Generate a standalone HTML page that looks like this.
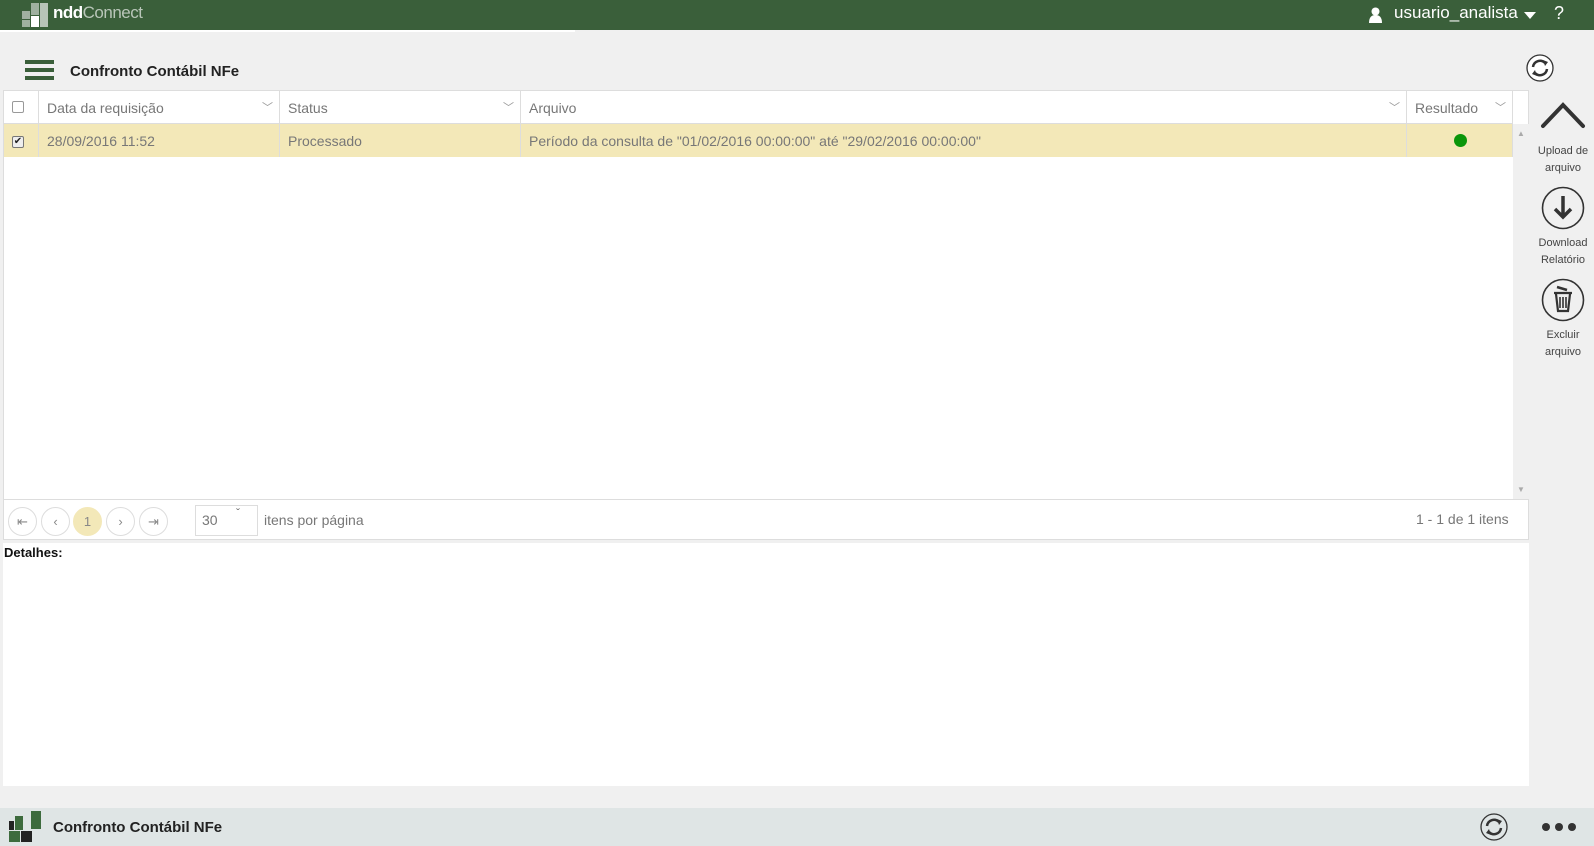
<!DOCTYPE html>
<html><head><meta charset="utf-8"><style>
*{box-sizing:border-box;margin:0;padding:0}
body{width:1594px;height:846px;overflow:hidden;background:#f0f0f0;font-family:"Segoe UI","Liberation Sans",sans-serif;color:#333;position:relative}
.a{position:absolute}
.hdr{left:0;top:0;width:1594px;height:30px;background:#3a5f3a}
.grid{left:3px;top:90px;width:1526px;height:410px;background:#fff;border:1px solid #ddd}
.th{position:absolute;top:0;height:33px;border-right:1px solid #ddd;border-bottom:1px solid #ddd;font-size:14px;color:#777;padding:9px 0 0 8px}
.td{position:absolute;top:33px;height:33px;border-right:1px solid #ddd;font-size:14px;color:#777;padding:9px 0 0 8px;background:#f3e8b8}
.chev{position:absolute;right:6px;top:8px;font-size:11px;color:#999}
.pb{position:absolute;top:507px;width:29px;height:29px;border:1px solid #ddd;border-radius:50%;background:#fff;font-size:13px;color:#888;text-align:center;line-height:27px}
.lbl{font-size:11px;color:#444;text-align:center;line-height:17px;width:60px}
</style></head><body>
<div class="a hdr"></div>
<svg class="a" style="left:22px;top:3px" width="26" height="24"><rect x="0" y="8" width="8" height="8" fill="#9fb09f"/><rect x="9" y="0" width="8" height="12" fill="#9fb09f"/><rect x="9" y="13" width="8" height="11" fill="#fff"/><rect x="18" y="0" width="8" height="24" fill="#b8c4b8"/><rect x="0" y="17" width="8" height="7" fill="#9fb09f"/></svg>
<div class="a" style="left:53px;top:3px;font-size:17px;color:#fff;font-weight:bold;letter-spacing:-0.5px">ndd<span style="font-weight:normal;color:#b9c6b9">Connect</span></div>
<svg class="a" style="left:1368px;top:7px" width="15" height="16"><circle cx="7.5" cy="4.5" r="4" fill="#fff"/><path d="M1 16 Q1 8 7.5 8 Q14 8 14 16Z" fill="#fff"/></svg>
<div class="a" style="left:1394px;top:3px;font-size:17px;color:#fff">usuario_analista</div>
<svg class="a" style="left:1524px;top:12px" width="12" height="7"><path d="M0 0H12L6 7Z" fill="#fff"/></svg>
<div class="a" style="left:1554px;top:3px;font-size:18px;color:#fff">?</div>
<div class="a" style="left:0;top:30px;width:575px;height:2px;background:#fff"></div>
<div class="a" style="left:25px;top:60px;width:29px;height:4px;background:#3a5f3a;box-shadow:0 8px 0 #3a5f3a,0 16px 0 #3a5f3a"></div>
<div class="a" style="left:70px;top:63px;font-size:15px;font-weight:bold;color:#222">Confronto Contábil NFe</div>
<svg class="a" style="left:1526px;top:54px" width="28" height="28" viewBox="0 0 28 28"><circle cx="14" cy="14" r="13" fill="#fff" stroke="#333" stroke-width="1.3"/><path d="M7 13 A7 7 0 0 1 19 9 M21 15 A7 7 0 0 1 9 19" stroke="#333" stroke-width="2.5" fill="none"/><path d="M17 6 L22 8 L19 12Z M11 22 L6 20 L9 16Z" fill="#333"/></svg>
<div class="a grid">
<div class="th" style="left:0;width:35px"><span style="display:inline-block;width:12px;height:12px;border:1px solid #999;border-radius:2px;margin-top:0px"></span></div>
<div class="th" style="left:35px;width:241px">Data da requisição<span class="chev">﹀</span></div>
<div class="th" style="left:276px;width:241px">Status<span class="chev">﹀</span></div>
<div class="th" style="left:517px;width:886px">Arquivo<span class="chev">﹀</span></div>
<div class="th" style="left:1403px;width:106px">Resultado<span class="chev">﹀</span></div>
<div class="td" style="left:0;width:35px;padding-top:7px"><span style="display:inline-block;width:12px;height:12px;border:1px solid #777;border-radius:2px;background:#eee;font-size:10px;line-height:10px;color:#222;text-align:center">✔</span></div>
<div class="td" style="left:35px;width:241px">28/09/2016 11:52</div>
<div class="td" style="left:276px;width:241px">Processado</div>
<div class="td" style="left:517px;width:886px">Período da consulta de "01/02/2016 00:00:00" até "29/02/2016 00:00:00"</div>
<div class="td" style="left:1403px;width:106px"><span style="position:absolute;left:47px;top:10px;width:13px;height:13px;border-radius:50%;background:#0a960a"></span></div>
<div style="position:absolute;left:1509px;top:33px;width:16px;height:375px;background:#f0f0f0"></div>
<div style="position:absolute;left:1513px;top:38px;font-size:8px;color:#aaa">▲</div>
<div style="position:absolute;left:1513px;top:394px;font-size:8px;color:#aaa">▼</div>
</div>
<div class="a" style="left:3px;top:500px;width:1526px;height:40px;background:#fff;border:1px solid #ddd;border-top:none"></div>
<div class="pb" style="left:8px">⇤</div>
<div class="pb" style="left:41px">‹</div>
<div class="pb" style="left:73px;background:#f3e8b8;border-color:#f3e8b8">1</div>
<div class="pb" style="left:106px">›</div>
<div class="pb" style="left:139px">⇥</div>
<div class="a" style="left:195px;top:505px;width:63px;height:31px;border:1px solid #ddd;background:#fff;font-size:14px;color:#777;padding:6px 0 0 6px">30<span style="position:absolute;left:40px;top:0;font-size:12px">ˇ</span></div>
<div class="a" style="left:264px;top:512px;font-size:14px;color:#777">itens por página</div>
<div class="a" style="left:1416px;top:511px;font-size:14px;color:#777">1 - 1 de 1 itens</div>
<div class="a" style="left:3px;top:543px;width:1526px;height:243px;background:#fff"></div>
<div class="a" style="left:4px;top:545px;font-size:13px;font-weight:bold;color:#111">Detalhes:</div>
<svg class="a" style="left:1540px;top:100px" width="46" height="30"><path d="M3 26 L23 5 L43 26" stroke="#333" stroke-width="4" fill="none" stroke-linecap="round"/></svg>
<div class="a lbl" style="left:1533px;top:143px">Upload de arquivo</div>
<svg class="a" style="left:1541px;top:186px" width="44" height="44"><circle cx="22" cy="22" r="20.5" fill="none" stroke="#333" stroke-width="1.6"/><path d="M22 10V30 M14 23 L22 31 L30 23" stroke="#333" stroke-width="3.5" fill="none"/></svg>
<div class="a lbl" style="left:1533px;top:235px">Download Relatório</div>
<svg class="a" style="left:1541px;top:278px" width="44" height="44"><circle cx="22" cy="22" r="20.5" fill="none" stroke="#333" stroke-width="1.6"/><path d="M13 15H31 M15 16 L17 33 H27 L29 16" stroke="#333" stroke-width="2.2" fill="none"/><path d="M19 19V30 M22 19V30 M25 19V30" stroke="#333" stroke-width="1.6"/><path d="M16 9 L26 12" stroke="#333" stroke-width="2.5"/></svg>
<div class="a lbl" style="left:1533px;top:327px">Excluir arquivo</div>
<div class="a" style="left:0;top:808px;width:1594px;height:38px;background:#dfe5e5"></div>
<svg class="a" style="left:9px;top:811px" width="32" height="31"><rect x="0" y="10" width="5" height="9" fill="#222"/><rect x="6" y="5" width="8" height="14" fill="#3d6b3d"/><rect x="0" y="20" width="11" height="11" fill="#3d6b3d"/><rect x="12" y="20" width="11" height="11" fill="#222"/><rect x="22" y="0" width="10" height="18" fill="#3d6b3d"/></svg>
<div class="a" style="left:53px;top:819px;font-size:15px;font-weight:bold;color:#222">Confronto Contábil NFe</div>
<svg class="a" style="left:1480px;top:813px" width="28" height="28" viewBox="0 0 28 28"><circle cx="14" cy="14" r="13" fill="none" stroke="#333" stroke-width="1.3"/><path d="M7 13 A7 7 0 0 1 19 9 M21 15 A7 7 0 0 1 9 19" stroke="#333" stroke-width="2.5" fill="none"/><path d="M17 6 L22 8 L19 12Z M11 22 L6 20 L9 16Z" fill="#333"/></svg>
<svg class="a" style="left:1541px;top:822px" width="36" height="10"><circle cx="5" cy="5" r="4" fill="#333"/><circle cx="18" cy="5" r="4" fill="#333"/><circle cx="31" cy="5" r="4" fill="#333"/></svg>
</body></html>
